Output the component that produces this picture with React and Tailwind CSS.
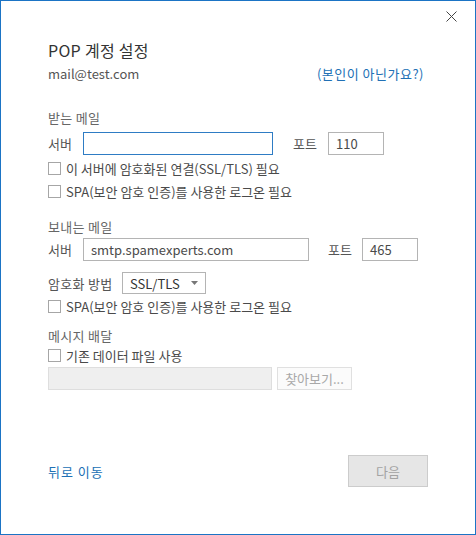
import React from "react";

const FONT = { fontFamily: '"Noto Sans CJK KR", "Noto Sans", sans-serif' };

function Check({ label }) {
  return (
    <label className="h-[20px] flex items-center gap-[5px] text-[13px] text-[#4a4a4a]">
      <span className="w-[13px] h-[13px] border border-[#a6a6a6] bg-white shrink-0" />
      <span className="leading-none">{label}</span>
    </label>
  );
}

function Field({ value, w, focus }) {
  return (
    <div
      className={`h-[23px] ${w} border ${focus ? "border-[#2e7cc4]" : "border-[#b4b4b4]"} bg-white flex items-center pl-[7px] text-[13px] text-[#4a4a4a] leading-none`}
    >
      {value}
    </div>
  );
}

export default function App() {
  return (
    <div
      className="w-[476px] h-[535px] border border-[#1b74c5] bg-white relative overflow-hidden"
      style={FONT}
    >
      {/* close button */}
      <svg className="absolute top-[10px] right-[18px]" width="11" height="11" viewBox="0 0 11 11">
        <path d="M0.5 0.5 L10.5 10.5 M10.5 0.5 L0.5 10.5" stroke="#444" strokeWidth="1" fill="none" />
      </svg>

      <div className="pt-[37px] pl-[47px] pr-[47px] flex flex-col">
        <div className="h-[24px] flex items-center text-[16px] text-[#333] leading-none tracking-[0.3px]">POP 계정 설정</div>
        <div className="h-[22px] flex items-center justify-between pr-[4px] text-[13px] leading-none">
          <span className="text-[#555]">mail@test.com</span>
          <span className="text-[#2170b5] tracking-[0.5px]">(본인이 아닌가요?)</span>
        </div>

        {/* incoming */}
        <div className="mt-[23px] h-[20px] flex items-center text-[13px] text-[#666] leading-none tracking-[0.3px]">받는 메일</div>
        <div className="mt-[5px] h-[23px] flex items-center text-[13px] text-[#555] leading-none">
          <span className="w-[35px]">서버</span>
          <Field value="" w="w-[190px]" focus />
          <span className="w-[35px] ml-[20px]">포트</span>
          <Field value="110" w="w-[56px]" />
        </div>
        <div className="mt-[3px]">
          <Check label="이 서버에 암호화된 연결(SSL/TLS) 필요" />
        </div>
        <div className="mt-[3px]">
          <Check label="SPA(보안 암호 인증)를 사용한 로그온 필요" />
        </div>

        {/* outgoing */}
        <div className="mt-[15px] h-[20px] flex items-center text-[13px] text-[#666] leading-none tracking-[0.3px]">보내는 메일</div>
        <div className="mt-[2px] h-[23px] flex items-center text-[13px] text-[#555] leading-none">
          <span className="w-[35px]">서버</span>
          <Field value="smtp.spamexperts.com" w="w-[226px]" />
          <span className="w-[34px] ml-[19px]">포트</span>
          <Field value="465" w="w-[56px]" />
        </div>
        <div className="mt-[11px] h-[22px] flex items-center text-[13px] text-[#555] leading-none">
          <span className="w-[74px] tracking-[0.3px]">암호화 방법</span>
          <div className="w-[84px] h-[22px] border border-[#b4b4b4] flex items-center justify-between pl-[7px] pr-[7px] text-[#333]">
            <span>SSL/TLS</span>
            <svg width="7" height="4" viewBox="0 0 7 4">
              <path d="M0 0 L7 0 L3.5 4 Z" fill="#777" />
            </svg>
          </div>
        </div>
        <div className="mt-[2px]">
          <Check label="SPA(보안 암호 인증)를 사용한 로그온 필요" />
        </div>

        {/* delivery */}
        <div className="mt-[9px] h-[20px] flex items-center text-[13px] text-[#666] leading-none tracking-[0.3px]">메시지 배달</div>
        <Check label="기존 데이터 파일 사용" />
        <div className="mt-[2px] h-[23px] flex items-center gap-[5px]">
          <div className="w-[224px] h-[23px] bg-[#efefef] border border-[#dedede]" />
          <div className="w-[75px] h-[23px] bg-[#fbfbfb] border border-[#e0e0e0] flex items-center justify-center text-[13px] text-[#a8a8a8] leading-none">
            찾아보기...
          </div>
        </div>

        {/* footer */}
        <div className="mt-[65px] h-[32px] flex items-center justify-between">
          <span className="text-[13px] text-[#2170b5] leading-none tracking-[1px]">뒤로 이동</span>
          <div className="w-[80px] h-[32px] bg-[#e6e6e6] border border-[#cccccc] flex items-center justify-center text-[13px] text-[#a3a3a3] leading-none">
            다음
          </div>
        </div>
      </div>
    </div>
  );
}
